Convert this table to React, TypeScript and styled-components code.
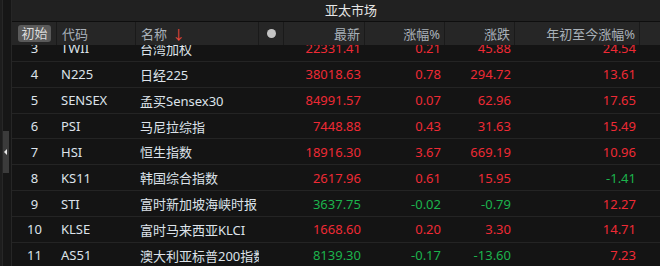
import React from "react";
import styled, { createGlobalStyle } from "styled-components";

const Global = createGlobalStyle`
  html, body { margin: 0; padding: 0; background: #141414; }
  body { font-family: "Noto Sans", "Noto Sans CJK SC", sans-serif; }
  * { box-sizing: border-box; }
`;

const COLS = "45px 79px 123px 25px 81px 80px 70px 125px 1fr";

const Page = styled.div`
  width: 660px;
  height: 266px;
  display: flex;
  overflow: hidden;
  background: #141414;
`;

const Strip = styled.div`
  width: 12px;
  flex: none;
  display: flex;
  background: #161616;
  border-right: 1px solid #262626;
`;

const StripEdge = styled.div`
  width: 3px;
  background: #1d1d1d;
  border-right: 1px solid #272727;
`;

const Track = styled.div`
  flex: 1;
  display: flex;
  flex-direction: column;
`;

const Thumb = styled.div`
  margin-top: 131px;
  width: 6px;
  height: 42px;
  background: #3b3b3b;
  display: flex;
  align-items: center;
  padding-left: 1px;
`;

const Arrow = styled.div`
  width: 0;
  height: 0;
  border-top: 3px solid transparent;
  border-bottom: 3px solid transparent;
  border-right: 3px solid #e8e8e8;
`;

const Main = styled.div`
  flex: 1;
  display: flex;
  flex-direction: column;
  min-width: 0;
`;

const TitleBar = styled.div`
  height: 22px;
  flex: none;
  background: #212121;
  border-bottom: 1px solid #0e0e0e;
  color: #e6e6e6;
  font-size: 13px;
  line-height: 21px;
  padding-left: 313px;
`;

const HeaderRow = styled.div`
  height: 23px;
  flex: none;
  display: grid;
  grid-template-columns: ${COLS};
  background: #262626;
`;

const HCell = styled.div<{ $align?: "left" | "right" | "center" }>`
  border-right: 1px solid #1a1a1a;
  display: flex;
  align-items: center;
  justify-content: ${(p) =>
    p.$align === "right" ? "flex-end" : p.$align === "center" ? "center" : "flex-start"};
  padding: 0 4px 0 5px;
  color: #a9b1b9;
  font-size: 13px;
  white-space: nowrap;
  overflow: hidden;
  &:last-child { border-right: none; }
`;

const Badge = styled.span`
  background: #5a5a5a;
  color: #dcdcdc;
  border-radius: 3px;
  padding: 0 3px;
  line-height: 17px;
  font-size: 13px;
`;

const SortArrow = styled.span`
  color: #f0473a;
  margin-left: 5px;
  font-size: 13px;
`;

const Dot = styled.span`
  width: 9px;
  height: 9px;
  border-radius: 50%;
  background: #c4c4c4;
`;

const Body = styled.div`
  flex: 1;
  overflow: hidden;
`;

const List = styled.div`
  margin-top: -9px;
`;

const Row = styled.div`
  height: 25.86px;
  display: grid;
  grid-template-columns: ${COLS};
  border-bottom: 1px solid #242424;
  font-size: 13px;
`;

const Cell = styled.div<{ $align?: "left" | "right" | "center"; $tone?: "up" | "down" | "plain" }>`
  display: flex;
  align-items: center;
  justify-content: ${(p) =>
    p.$align === "right" ? "flex-end" : p.$align === "center" ? "center" : "flex-start"};
  padding: 0 4px 0 4px;
  white-space: nowrap;
  overflow: hidden;
  color: ${(p) => (p.$tone === "up" ? "#ee2a35" : p.$tone === "down" ? "#1cb34c" : "#dde3ea")};
`;

type Item = {
  n: number;
  code: string;
  name: string;
  last: string;
  pct: string;
  chg: string;
  ytd: string;
};

const rows: Item[] = [
  { n: 3, code: "TWII", name: "台湾加权", last: "22331.41", pct: "0.21", chg: "45.88", ytd: "24.54" },
  { n: 4, code: "N225", name: "日经225", last: "38018.63", pct: "0.78", chg: "294.72", ytd: "13.61" },
  { n: 5, code: "SENSEX", name: "孟买Sensex30", last: "84991.57", pct: "0.07", chg: "62.96", ytd: "17.65" },
  { n: 6, code: "PSI", name: "马尼拉综指", last: "7448.88", pct: "0.43", chg: "31.63", ytd: "15.49" },
  { n: 7, code: "HSI", name: "恒生指数", last: "18916.30", pct: "3.67", chg: "669.19", ytd: "10.96" },
  { n: 8, code: "KS11", name: "韩国综合指数", last: "2617.96", pct: "0.61", chg: "15.95", ytd: "-1.41" },
  { n: 9, code: "STI", name: "富时新加坡海峡时报", last: "3637.75", pct: "-0.02", chg: "-0.79", ytd: "12.27" },
  { n: 10, code: "KLSE", name: "富时马来西亚KLCI", last: "1668.60", pct: "0.20", chg: "3.30", ytd: "14.71" },
  { n: 11, code: "AS51", name: "澳大利亚标普200指数", last: "8139.30", pct: "-0.17", chg: "-13.60", ytd: "7.23" },
];

const tone = (v: string) => (v.startsWith("-") ? "down" : "up");

export default function App() {
  return (
    <>
      <Global />
      <Page>
        <Strip>
          <StripEdge />
          <Track>
            <Thumb>
              <Arrow />
            </Thumb>
          </Track>
        </Strip>
        <Main>
          <TitleBar>亚太市场</TitleBar>
          <HeaderRow>
            <HCell $align="center">
              <Badge>初始</Badge>
            </HCell>
            <HCell>代码</HCell>
            <HCell>
              名称<SortArrow>↓</SortArrow>
            </HCell>
            <HCell $align="center">
              <Dot />
            </HCell>
            <HCell $align="right">最新</HCell>
            <HCell $align="right">涨幅%</HCell>
            <HCell $align="right">涨跌</HCell>
            <HCell $align="right">年初至今涨幅%</HCell>
            <HCell />
          </HeaderRow>
          <Body>
            <List>
              {rows.map((r) => (
                <Row key={r.n}>
                  <Cell $align="center">{r.n}</Cell>
                  <Cell>{r.code}</Cell>
                  <Cell>{r.name}</Cell>
                  <Cell />
                  <Cell $align="right" $tone={tone(r.pct)}>{r.last}</Cell>
                  <Cell $align="right" $tone={tone(r.pct)}>{r.pct}</Cell>
                  <Cell $align="right" $tone={tone(r.chg)}>{r.chg}</Cell>
                  <Cell $align="right" $tone={tone(r.ytd)}>{r.ytd}</Cell>
                  <Cell />
                </Row>
              ))}
            </List>
          </Body>
        </Main>
      </Page>
    </>
  );
}
